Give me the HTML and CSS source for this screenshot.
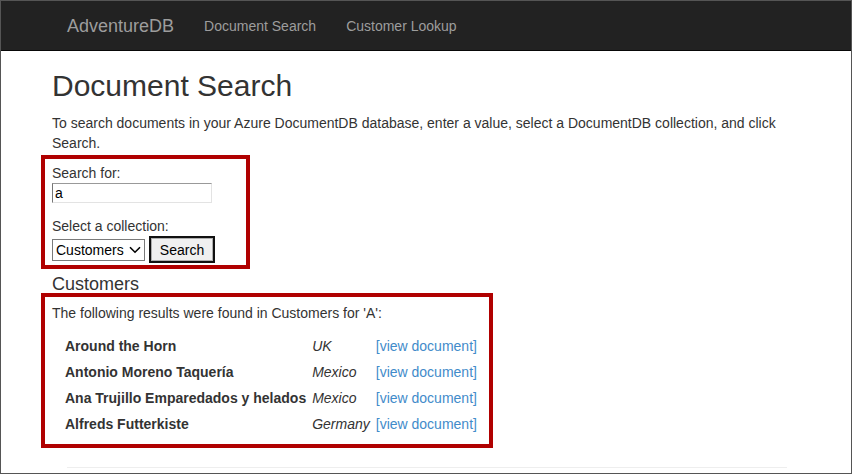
FILE: index.html
```html
<!DOCTYPE html>
<html>
<head>
<meta charset="utf-8">
<title>Document Search - AdventureDB</title>
<link rel="stylesheet" href="styles.css">
</head>
<body>
<div class="frame">
  <nav class="navbar">
    <a class="brand" href="#">AdventureDB</a>
    <a class="nav-link" href="#">Document Search</a>
    <a class="nav-link" href="#">Customer Lookup</a>
  </nav>
  <main class="content">
    <h1 class="title">Document Search</h1>
    <p class="intro">To search documents in your Azure DocumentDB database, enter a value, select a DocumentDB collection, and click Search.</p>
    <form class="box search-box">
      <label class="lbl" for="q">Search for:</label>
      <input class="text-input" id="q" type="text" value="a">
      <label class="lbl lbl-2" for="coll">Select a collection:</label>
      <div class="controls">
        <span class="select-wrap">
          <select class="select" id="coll"><option>Customers</option></select>
          <svg class="chev" width="12" height="8" viewBox="0 0 12 8"><path d="M1 1.2 L6 6.2 L11 1.2" fill="none" stroke="#000" stroke-width="1.6"/></svg>
        </span>
        <button class="btn" type="button">Search</button>
      </div>
    </form>
    <h3 class="subtitle">Customers</h3>
    <div class="box results-box">
      <p class="found">The following results were found in Customers for 'A':</p>
      <table class="results">
        <tr><td class="name">Around the Horn</td><td class="country">UK</td><td><a href="#">[view document]</a></td></tr>
        <tr><td class="name">Antonio Moreno Taquería</td><td class="country">Mexico</td><td><a href="#">[view document]</a></td></tr>
        <tr><td class="name">Ana Trujillo Emparedados y helados</td><td class="country">Mexico</td><td><a href="#">[view document]</a></td></tr>
        <tr><td class="name">Alfreds Futterkiste</td><td class="country">Germany</td><td><a href="#">[view document]</a></td></tr>
      </table>
    </div>
    <hr class="footer-rule">
  </main>
</div>
</body>
</html>
```

FILE: styles.css
```css
* { box-sizing: border-box; }
html, body { margin: 0; padding: 0; }
body {
  font-family: "Liberation Sans", Arial, sans-serif;
  font-size: 14px;
  line-height: 20px;
  color: #333;
  background: #fff;
}
.frame {
  width: 852px;
  height: 474px;
  border: 1px solid #555;
  overflow: hidden;
}
.navbar {
  height: 50px;
  background: #222;
  border-bottom: 1px solid #080808;
  display: flex;
  align-items: center;
  padding-left: 51px;
}
.navbar a { text-decoration: none; color: #9d9d9d; }
.brand {
  font-size: 18px;
  padding: 0 15px;
  line-height: 20px;
}
.nav-link {
  font-size: 14px;
  padding: 0 15px;
}
.content {
  padding-left: 51px;
  width: 799px;
}
.title {
  font-size: 30px;
  font-weight: normal;
  line-height: 33px;
  margin: 18px 0 11px;
  color: #333;
}
.intro { margin: 0 0 2px; }
.box {
  border: 4px solid #b00000;
  margin-left: -11px;
  padding-left: 7px;
}
.search-box {
  width: 209px;
  padding-top: 4px;
  padding-bottom: 2px;
  display: flex;
  flex-direction: column;
  align-items: flex-start;
}
.lbl { display: block; }
.lbl-2 { margin-top: 13px; }
.text-input {
  width: 160px;
  height: 20px;
  margin: 0;
  padding: 0 2px;
  font: 14px "Liberation Sans", Arial, sans-serif;
  color: #000;
  border: 1px solid;
  border-color: #999 #e3e3e3 #e3e3e3 #767676;
  outline: none;
}
.controls {
  display: flex;
  align-items: center;
  gap: 4px;
  margin-top: 0;
}
.select-wrap { position: relative; display: inline-block; }
.select {
  -webkit-appearance: none;
  appearance: none;
  width: 93px;
  height: 22px;
  margin: 0;
  padding: 0 0 0 3px;
  border: 1px solid #7a7a7a;
  border-radius: 0;
  background: #fff;
  font: 14px "Liberation Sans", Arial, sans-serif;
  color: #000;
  outline: none;
}
.chev {
  position: absolute;
  right: 4px;
  top: 7px;
  pointer-events: none;
}
.btn {
  width: 66px;
  height: 27px;
  margin: 0;
  padding: 0;
  border: 2px solid #111;
  background: #f0f0f0;
  box-shadow: inset 0 0 0 1px #adadad;
  font: 14px "Liberation Sans", Arial, sans-serif;
  color: #000;
  border-radius: 0;
}
.subtitle {
  font-size: 18px;
  font-weight: normal;
  line-height: 20px;
  margin: 5px 0 -1px;
}
.results-box {
  width: 452px;
  padding-top: 6px;
  padding-bottom: 7px;
}
.found { margin: 0 0 10px; }
.results {
  border-collapse: collapse;
  margin-left: 10px;
}
.results td {
  padding: 0 3px;
  height: 26px;
  line-height: 20px;
  white-space: nowrap;
}
.results .name { font-weight: bold; }
.results .country { font-style: italic; }
.results a { color: #428bca; text-decoration: none; }
.footer-rule {
  border: 0;
  border-top: 1px solid #eee;
  margin: 19px 0 0 15px;
  width: 720px;
}
```
